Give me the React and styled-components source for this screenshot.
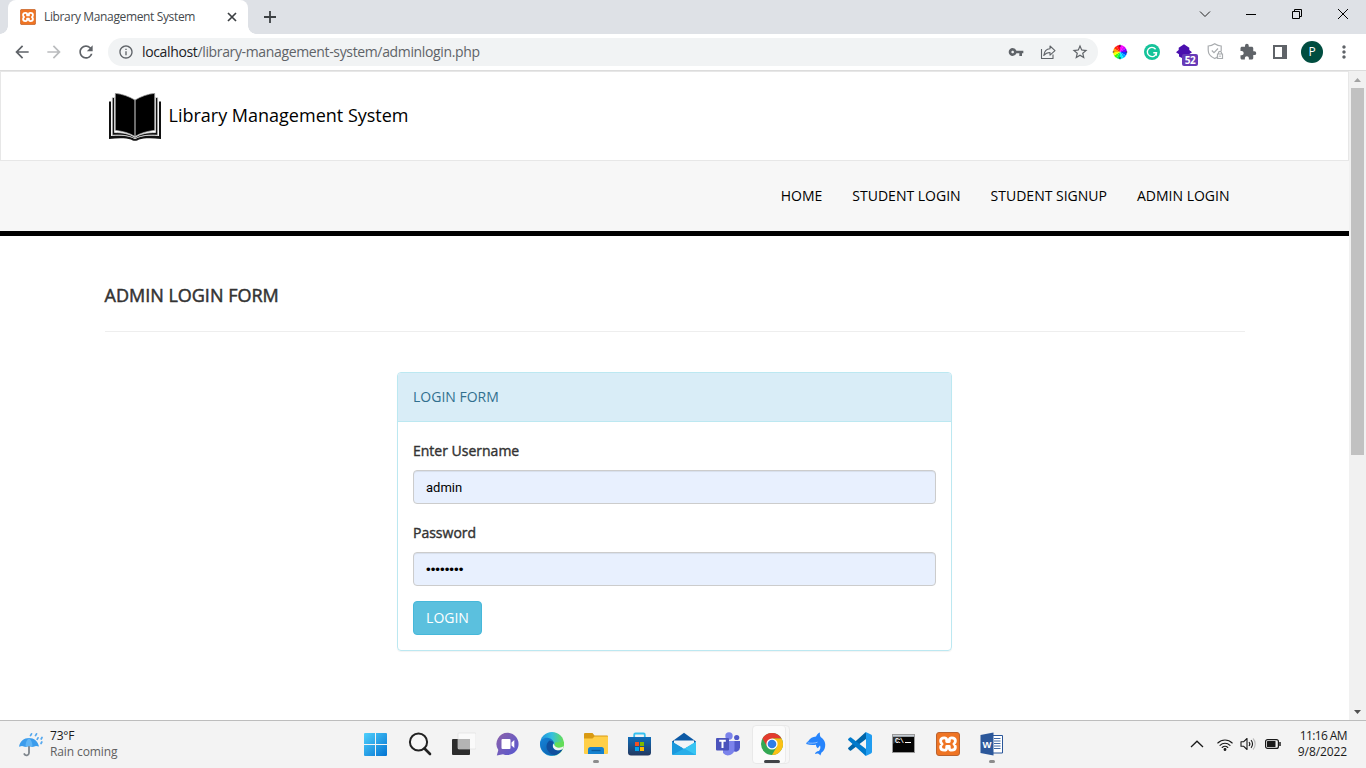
import React from "react";
import styled, { createGlobalStyle } from "styled-components";
import {
  MdArrowBack, MdArrowForward, MdRefresh, MdInfoOutline,
  MdVpnKey, MdStarBorder, MdExtension, MdMoreVert,
} from "react-icons/md";

const uiFont = `"Open Sans", "Noto Sans", sans-serif`;

const Global = createGlobalStyle`
  *, *::before, *::after { box-sizing: border-box; }
  html, body { margin: 0; overflow: hidden; }
  body { font-family: ${uiFont}; background: #fff; color: #000; }
  svg { display: block; flex: none; }
`;

const Screen = styled.div`
  width: 1366px;
  height: 768px;
  display: grid;
  grid-template-rows: 34px 37px 649px 48px;
  overflow: hidden;
`;

/* ---------- Browser ---------- */
const TabStrip = styled.header`
  display: flex;
  background: #dee1e6;
  padding-left: 8px;
`;
const Tab = styled.div`
  position: relative;
  width: 240px;
  height: 34px;
  padding: 0 8px 0 12px;
  display: flex;
  align-items: center;
  background: #fff;
  border-radius: 8px 8px 0 0;
  &::before, &::after {
    content: "";
    position: absolute;
    bottom: 0;
    width: 8px;
    height: 8px;
  }
  &::before { left: -8px; background: radial-gradient(circle at 0 0, transparent 7.5px, #fff 8px); }
  &::after { right: -8px; background: radial-gradient(circle at 100% 0, transparent 7.5px, #fff 8px); }
`;
const TabTitle = styled.span`
  flex: 1;
  margin-left: 8px;
  padding-bottom: 1px;
  font-size: 12px;
  letter-spacing: -0.36px;
  color: #45494d;
  white-space: nowrap;
`;
const NewTab = styled.div`
  width: 44px;
  display: flex;
  align-items: center;
  justify-content: center;
`;
const WindowControls = styled.div`
  margin-left: auto;
  display: flex;
  height: 28px;
`;
const WindowButton = styled.div`
  width: 46px;
  display: flex;
  align-items: center;
  justify-content: center;
`;
const Toolbar = styled.div`
  display: flex;
  align-items: center;
  padding: 0 6px;
  background: #fff;
  border-bottom: 1px solid #dcdcdc;
`;
const ToolSlot = styled.div`
  position: relative;
  width: 32px;
  height: 28px;
  display: flex;
  align-items: center;
  justify-content: center;
  color: ${(p) => p.$color || "#5f6368"};
`;
const Omnibox = styled.div`
  flex: none;
  width: 990px;
  height: 28px;
  margin: 0 6px;
  padding: 0 2px 0 10px;
  display: flex;
  align-items: center;
  border-radius: 14px;
  background: #f1f3f4;
  color: #5f6368;
`;
const Address = styled.span`
  flex: 1;
  margin-left: 8px;
  padding-bottom: 1px;
  font-size: 14px;
  letter-spacing: -0.355px;
  white-space: nowrap;
  b { font-weight: 400; color: #202124; }
`;
const Badge = styled.span`
  position: absolute;
  left: 14px;
  top: 16px;
  width: 16px;
  height: 12px;
  border-radius: 2px;
  background: #673ab7;
  color: #fff;
  font-size: 10px;
  font-weight: 700;
  letter-spacing: -0.4px;
  line-height: 12px;
  text-align: center;
`;
const Avatar = styled.div`
  width: 22px;
  height: 22px;
  border-radius: 50%;
  background: #004d40;
  color: #fff;
  font-size: 12px;
  line-height: 22px;
  text-align: center;
`;

/* ---------- Page ---------- */
const Viewport = styled.div`
  display: flex;
  overflow: hidden;
`;
const Page = styled.div`
  width: 1349px;
  background: #fff;
`;
const Container = styled.div`
  width: 1170px;
  height: 100%;
  margin: 0 auto;
  padding: 0 15px;
  display: ${(p) => (p.$row ? "flex" : "block")};
  justify-content: ${(p) => p.$justify || "flex-start"};
  align-items: center;
`;
const Masthead = styled.div`
  height: 90px;
  border: 1px solid #e7e7e7;
`;
const BookMark = styled.svg`
  margin: 2px 0 0 4.5px;
`;
const Brand = styled.a`
  margin-left: 7.5px;
  padding-bottom: 2px;
  font-size: 18px;
  color: #000;
`;
const Menu = styled.nav`
  height: 75px;
  background: #f7f7f7;
  border-bottom: 5px solid #000;
`;
const MenuLink = styled.a`
  padding: 0 15px 2px;
  font-size: 14px;
  color: #000;
  white-space: nowrap;
`;
const PageTitle = styled.h4`
  margin: 0 0 40px;
  padding: 49px 0 26px;
  border-bottom: 1px solid #eee;
  font-size: 18px;
  line-height: 20px;
  font-weight: 400;
  -webkit-text-stroke: 0.5px #333;
  color: #333;
`;
const Panel = styled.section`
  width: 555px;
  margin: 0 auto;
  border: 1px solid #bce8f1;
  border-radius: 4px;
  box-shadow: 0 1px 1px rgba(0, 0, 0, 0.05);
`;
const PanelHeading = styled.div`
  padding: 10px 15px;
  line-height: 28px;
  font-size: 14px;
  color: #31708f;
  background: #d9edf7;
  border-bottom: 1px solid #bce8f1;
  border-radius: 3px 3px 0 0;
`;
const PanelBody = styled.form`
  padding: 15px;
`;
const Field = styled.div`
  margin-bottom: 15px;
`;
const Label = styled.label`
  display: block;
  margin-bottom: 5px;
  font-size: 14px;
  line-height: 28px;
  color: #333;
  -webkit-text-stroke: 0.4px #333;
`;
const Input = styled.input`
  display: block;
  width: 100%;
  height: 34px;
  padding: 6px 12px;
  border: 1px solid #ccc;
  border-radius: 4px;
  outline: none;
  background: #e8f0fe;
  box-shadow: inset 0 1px 1px rgba(0, 0, 0, 0.075);
  color: #000;
  font: ${(p) => (p.type === "password" ? '13.33px "Liberation Sans"' : "13px Roboto")}, sans-serif;
`;
const LoginButton = styled.button`
  display: block;
  width: 69px;
  height: 34px;
  padding: 0;
  border: 1px solid #46b8da;
  border-radius: 4px;
  background: #5bc0de;
  color: #fff;
  font: 14px/20px ${uiFont};
`;
const Scrollbar = styled.div`
  width: 17px;
  display: flex;
  flex-direction: column;
  align-items: center;
  background: #f1f1f1;
`;
const ScrollArrow = styled.div`
  height: 17px;
  display: flex;
  align-items: center;
`;
const ScrollTrack = styled.div`
  flex: 1;
`;
const ScrollThumb = styled.div`
  width: 13px;
  height: 367px;
  background: #c1c1c1;
`;

/* ---------- Taskbar ---------- */
const Taskbar = styled.footer`
  display: grid;
  grid-template-columns: 354px 660px 1fr;
  border-top: 1px solid #bdbdbd;
  background: #f3f3f3;
`;
const Weather = styled.div`
  display: flex;
  align-items: center;
  padding: 0 0 1px 18px;
  gap: 7px;
`;
const WeatherText = styled.div`
  font-size: 12px;
  line-height: 16px;
  letter-spacing: -0.2px;
  color: #1a1a1a;
  small { display: block; font-size: 12px; color: #606060; letter-spacing: -0.1px; }
`;
const Apps = styled.div`
  display: flex;
`;
const AppSlot = styled.div`
  position: relative;
  width: 44px;
  height: 47px;
  padding: 0 1px 1px 0;
  display: flex;
  align-items: center;
  justify-content: center;
  &::before {
    content: "";
    position: absolute;
    inset: 4px 4px 4px 2px;
    border-radius: 4px;
    background: ${(p) => (p.$active ? "#fbfbfb" : "none")};
    border: ${(p) => (p.$active ? "1px solid #e9e9e9" : "0")};
    box-shadow: ${(p) => (p.$active ? "inset -3px 0 #f7f7f7, inset -4px 0 #ebebeb" : "none")};
  }
  &::after {
    content: "";
    position: absolute;
    bottom: 5px;
    width: ${(p) => (p.$active ? 16 : 6)}px;
    height: 3px;
    border-radius: 2px;
    background: ${(p) => (p.$active ? "#404347" : p.$open ? "#8c8c8c" : "none")};
  }
  svg { position: relative; }
`;
const Tray = styled.div`
  display: flex;
  align-items: center;
  justify-content: flex-end;
  padding: 0 19px 1px 0;
`;
const TraySlot = styled.div`
  width: ${(p) => p.$w}px;
  display: flex;
  justify-content: center;
`;
const Clock = styled.div`
  width: 59px;
  display: flex;
  flex-direction: column;
  align-items: flex-end;
  font-size: 12px;
  line-height: 16px;
  color: #1a1a1a;
  white-space: nowrap;
`;
const Time = styled.span`
  letter-spacing: -0.6px;
`;
const Day = styled.span`
  letter-spacing: -0.1px;
`;

/* ---------- Icons ---------- */
const Xampp = ({ size }) => (
  <svg width={size} height={size} viewBox="0 0 24 24">
    <rect x=".5" y=".5" width="23" height="23" rx="2.500" fill="#ef7423" stroke="#b9622f" />
    <path d="M8.200 5.800c-2.400 0-3.600 1.400-3.600 3.100 0 1.400.6 2.300 1.500 3.100-.9.8-1.500 1.700-1.500 3.100 0 1.700 1.200 3.100 3.600 3.100 1.700 0 2.500-.9 2.500-2.300v-1.500h2.600v1.500c0 1.400.8 2.300 2.500 2.300 2.400 0 3.600-1.400 3.600-3.100 0-1.400-.6-2.300-1.500-3.100.9-.8 1.500-1.700 1.500-3.100 0-1.700-1.200-3.100-3.600-3.100-1.700 0-2.500.9-2.500 2.300v1.500h-2.600V8.100c0-1.400-.8-2.300-2.500-2.300z" fill="none" stroke="#fff" strokeWidth="2.800" strokeLinejoin="round" />
  </svg>
);
const Book = () => (
  <BookMark width="52" height="48" viewBox="0 0 52 48">
    <path d="M0 8.500h2V43c9-.8 18-.8 24 3 6-3.800 15-3.800 24-3V8.500h2V46c-9-1-17-1-22 .5-2 1.700-6 1.700-8 0-5-1.500-13-1.500-22-.5z" fill="#111" />
    <path d="M3.200 4.500h2.300v35c8 0 15 1.200 20.500 5 5.500-3.800 12.500-5 20.500-5v-35h2.300v37.800c-8-.5-16-.2-22.800 3.400-6.800-3.600-14.800-3.900-22.800-3.400z" fill="#111" stroke="#e4e4e4" strokeWidth=".8" />
    <path d="M6.300.3C13 1 20 3.400 26 7c6-3.600 13-6 19.700-6.700v37C38 38.300 31.500 40 26 43.500c-5.500-3.500-12-5.200-19.700-6.200z" fill="#000" stroke="#aaa" strokeWidth=".7" />
    <path d="M26 7v36" stroke="#b5b5b5" strokeWidth="1.200" />
  </BookMark>
);
const ShareIcon = () => (
  <svg width="16" height="16" viewBox="0 0 16 16" fill="none" stroke="#5f6368" strokeWidth="1.100" strokeLinejoin="round">
    <path d="M1.500 5v9.500h11.500v-4" />
    <path d="M3.800 11.500c.4-4.200 2.500-6.600 6.200-6.800V2l5 4.600-5 4.500V8.500c-2.900 0-4.600 1-6.200 3z" />
  </svg>
);
const ColorWheel = () => {
  const colors = ["#f0f", "#d0f", "#70f", "#04f", "#0af", "#0ef", "#0e6", "#4f0", "#ff0", "#fa0", "#f30", "#f02"];
  return (
    <svg width="16" height="16" viewBox="-8 -8 16 16">
      {colors.map((c, i) => (
        <path key={c} d="M0 0L0-6.900A6.900 6.900 0 0 1 3.450-5.980Z" fill={c} transform={`rotate(${i * 30})`} />
      ))}
      <path d="M0-7.300v2.300M0 5v2.300M-7.300 0h1.600M5.700 0h1.600" stroke="#222" strokeWidth=".9" />
    </svg>
  );
};
const Grammarly = () => (
  <svg width="16" height="16" viewBox="0 0 16 16">
    <circle cx="8" cy="8" r="8" fill="#15c39a" />
    <path d="M11.600 5.200A4.600 4.600 0 1 0 12.500 8.700H9.300M12.500 8.700l-.3 3" fill="none" stroke="#fff" strokeWidth="1.400" />
  </svg>
);
const Cap = () => (
  <svg width="16" height="16" viewBox="0 0 16 16">
    <path d="M8 .3l5.300 3.500V6L16 8.300l-3 2v2.200L8 15l-5-2.500v-2.200l-3-2L2.700 6V3.800z" fill="#4a0fae" />
  </svg>
);
const ShieldIcon = () => (
  <svg width="18" height="18" viewBox="0 0 18 18" fill="none" stroke="#a9acaf" strokeWidth="1.200">
    <path d="M11 13.500c-1 .9-2 1.500-3.300 2C3.500 13.800 1.200 11 1.200 7V3c2.500 0 4.500-.8 6.500-2.200C9.700 2.200 11.700 3 14.200 3v5" />
    <path d="M4.800 7.500l2.200 2.200 4-4.200" />
    <path d="M10.500 11h5v4.500h-5zM11.500 11V9.800a1.500 1.500 0 0 1 3 0V11M13 12.500v1.500" />
  </svg>
);
const SidePanel = () => (
  <svg width="14" height="14" viewBox="0 0 14 14">
    <path d="M0 0h14v14H0zM2 2v10h7V2z" fill="#5f6368" fillRule="evenodd" />
  </svg>
);
const Umbrella = () => (
  <svg width="25" height="25" viewBox="0 0 25 25">
    <path d="M11 10v11a2.500 2.500 0 0 1-4.700 1" fill="none" stroke="#7e858c" strokeWidth="1.800" strokeLinecap="round" />
    <path d="M1 14.800C2 9.300 6 6 11 6s9 3.300 10 8.500l-3-.6-3.500 1-3.500-.8-3.500.8L4 13.900z" fill="#3b9cec" />
    <path d="M11 6c-2.500 2-3.500 5-3.500 8.900l3.500-.8 3.500.8c0-3.900-1-6.900-3.500-8.900z" fill="#61b5f5" />
    <path d="M13.500 1.800l-1 1.800M18.500 1.800l-1 1.800M20 5.800l-.8 1.500M24 5.500l-.8 1.500M23.800 10l-.8 1.500" stroke="#55a8ee" strokeWidth="1.700" strokeLinecap="round" />
  </svg>
);
const Windows = () => (
  <svg width="24" height="24" viewBox="0 0 24 24">
    <defs><linearGradient id="win" gradientUnits="userSpaceOnUse" x1="0" y1="0" x2="24" y2="24"><stop stopColor="#4fd0fc" /><stop offset="1" stopColor="#006fd0" /></linearGradient></defs>
    <path d="M0 1a1 1 0 0 1 1-1h10v11H0zM12 0h10a1 1 0 0 1 1 1v10H12zM0 12h11v11H1a1 1 0 0 1-1-1zM12 12h11v10a1 1 0 0 1-1 1H12z" transform="translate(0 1)" fill="url(#win)" />
  </svg>
);
const SearchIcon = () => (
  <svg width="24" height="24" viewBox="0 0 24 24" fill="none" stroke="#222">
    <circle cx="10.500" cy="10" r="8.600" strokeWidth="2" fill="#f7f7f7" />
    <path d="M16.500 16.500l5.500 5.500" strokeWidth="2.600" strokeLinecap="round" />
  </svg>
);
const TaskView = () => (
  <svg width="24" height="24" viewBox="0 0 24 24">
    <rect x="0" y="7" width="18" height="16" rx="1" fill="#2d2d2d" />
    <rect x="6" y="1" width="18" height="16" rx="1" fill="#fafafa" stroke="#ddd" strokeWidth=".6" />
    <path d="M6 7h12v10H7a1 1 0 0 1-1-1z" fill="#b4b4b4" />
  </svg>
);
const Chat = () => (
  <svg width="24" height="24" viewBox="0 0 24 24">
    <defs><linearGradient id="chat" x1="0" y1="0" x2="1" y2="1"><stop stopColor="#8d62aa" /><stop offset="1" stopColor="#5557d0" /></linearGradient></defs>
    <path d="M12 .7a11.200 11.200 0 1 1-5 21.500L.8 23.500 2.300 18A11.200 11.200 0 0 1 12 .7z" fill="url(#chat)" />
    <rect x="5.500" y="7" width="9" height="10" rx="1" fill="#fff" />
    <path d="M15.500 10.500L18.300 8v8l-2.800-2.500z" fill="#fff" />
  </svg>
);
const Edge = () => (
  <svg width="24" height="24" viewBox="0 0 24 24">
    <defs>
      <linearGradient id="e1" x1="0" y1=".3" x2="1" y2=".3"><stop stopColor="#1b8fdb" /><stop offset=".5" stopColor="#35bfe0" /><stop offset="1" stopColor="#66e04b" /></linearGradient>
      <linearGradient id="e2" x1="0" y1="0" x2="1" y2="1"><stop stopColor="#1583d8" /><stop offset="1" stopColor="#0c59a4" /></linearGradient>
    </defs>
    <circle cx="12" cy="12" r="12" fill="url(#e1)" />
    <path d="M0 12C.5 7 5 5 8.500 6c3.500.8 5.500 3 5.500 6-1.500 2.500-.5 5.300 3 6.200 2.200.5 4-.1 5.500-.9A12 12 0 0 1 0 12z" fill="url(#e2)" />
    <path d="M9.500 8.500c-3 2.300-4 6.500-1.800 10 1.700 2.800 4.300 4.300 7.300 4.700 3.500-.8 6-3 7.500-5.900-4.500 2.500-9.500 1.300-10-3.300-.2-1.700.4-3 1.300-4z" fill="#104f9e" />
    <path d="M24 11.500c0 3.200-2.500 5-5.500 5-3.500 0-4.800-1.500-4.300-2.700.7-1 1-1.800.6-3.300l9-.5z" fill="#62dd58" />
    <path d="M22.800 16.800c-2 1.500-4.800 1.900-6.800 1.100-3-1.100-4-4-2.300-6.400.6 3 2.800 4.200 5.300 4.200 1.700 0 3.500-.5 4.500-1.700z" fill="#f3f3f3" />
  </svg>
);
const Folder = () => (
  <svg width="24" height="24" viewBox="0 0 24 24">
    <path d="M0 2a1 1 0 0 1 1-1h7.500l2 2.500H23a1 1 0 0 1 1 1V9H0z" fill="#d99a13" />
    <path d="M0 6.500h8.500l2-2H24V21a1 1 0 0 1-1 1H1a1 1 0 0 1-1-1z" fill="#ffcf48" />
    <path d="M4 22v-4.500A2.500 2.500 0 0 1 6.500 15h11a2.500 2.500 0 0 1 2.500 2.500V22z" fill="#1481cf" />
    <path d="M7.500 18.500h9" stroke="#0a5a9c" strokeWidth="1.300" />
  </svg>
);
const Store = () => (
  <svg width="24" height="24" viewBox="0 0 24 24">
    <defs><linearGradient id="store" x1="0" y1="0" x2="0" y2="1"><stop stopColor="#0e6dba" /><stop offset="1" stopColor="#24385f" /></linearGradient></defs>
    <path d="M6.200 6V2.800A1.300 1.300 0 0 1 7.500 1.500h8a1.300 1.300 0 0 1 1.300 1.300V6" fill="none" stroke="#35c1f1" strokeWidth="1.800" />
    <path d="M0 5h23v15.500a3 3 0 0 1-3 3H3a3 3 0 0 1-3-3z" fill="url(#store)" />
    <path d="M7 10h4v4H7z" fill="#f25022" /><path d="M12 10h4v4h-4z" fill="#7fba00" />
    <path d="M7 15h4v4H7z" fill="#00a4ef" /><path d="M12 15h4v4h-4z" fill="#ffb900" />
  </svg>
);
const Mail = () => (
  <svg width="24" height="24" viewBox="0 0 24 24">
    <path d="M0 9.500L12 .7l12 8.800V16H0z" fill="#0c59a5" />
    <path d="M2 8.500h20v3L12 17 2 11.500z" fill="#f2f5f8" />
    <path d="M24 9.500V23H2z" fill="#38c5f3" /><path d="M0 9.500L22 23H1a1 1 0 0 1-1-1z" fill="#1a98dc" />
    <path d="M0 23L12.300 16.600 24 23z" fill="#28aee9" />
  </svg>
);
const Teams = () => (
  <svg width="24" height="24" viewBox="0 0 24 24">
    <circle cx="13" cy="4" r="3.700" fill="#7b83eb" /><circle cx="20.700" cy="5.500" r="2.600" fill="#5059c9" />
    <path d="M15 9h9v6.500a4.500 4.500 0 0 1-7 3.500z" fill="#5059c9" />
    <path d="M7 9h11.500v8a6.500 6.500 0 0 1-11.500 4z" fill="#7b83eb" />
    <rect x="0" y="6" width="13" height="12.500" rx="1" fill="#4b53bc" />
    <path d="M3.200 8.800h6.600M6.500 8.800v7.200" stroke="#fff" strokeWidth="2" />
  </svg>
);
const Chrome = () => (
  <svg width="24" height="24" viewBox="0 0 24 24">
    <circle cx="12" cy="12" r="11" fill="#34a853" />
    <path d="M2.470 6.500A11 11 0 0 1 21.530 6.500H12L7.200 14.700z" fill="#e33b2e" />
    <path d="M21.530 6.500A11 11 0 0 1 12 23l4.800-8.200L12 6.500z" fill="#fbc116" />
    <circle cx="12" cy="12" r="5.600" fill="#fff" /><circle cx="12" cy="12" r="4.300" fill="#2f7de9" />
  </svg>
);
const Dolphin = () => (
  <svg width="24" height="24" viewBox="0 0 24 24">
    <path d="M2.200 12c.2-1.500 1-2.300 2-2.800C6 6.300 8.800 4.700 12 4.500 12.800 2.500 14.200 1 16 .4c-.4 1.800-.2 3.500.9 4.800 3.900 2.600 5.200 6.500 3.900 10.700-.6 2-1.800 3.600-3.300 4.700l-1.200 3c-.7-1-1.300-1.700-2.300-2.100-1.200-.3-2 .1-3 .5.3-1.700 1.700-2.900 4-3 1.500-2 1.700-3.800 1-5.500l-2.200 2.700c-1.300-.9-1.800-1.900-1.800-3.500-3.500.8-6.800.2-9.800-.7z" fill="#2684fc" />
    <path d="M3.500 10.800c3.500.6 7 .6 10-.6" fill="none" stroke="#d6e6fb" strokeWidth=".6" />
  </svg>
);
const VSCode = () => (
  <svg width="24" height="24" viewBox="0 0 24 24">
    <path d="M.4 15.800a1 1 0 0 0 0 1.400l1.400 1.200a1 1 0 0 0 1.300 0L18 7V.3a1.800 1.800 0 0 0-1 .5z" fill="#0065a9" />
    <path d="M.4 8.200a1 1 0 0 1 0-1.400l1.400-1.200a1 1 0 0 1 1.300 0L18 17v6.700a1.800 1.800 0 0 1-1-.5z" fill="#007acc" />
    <path d="M17.500 23.800a1.500 1.500 0 0 1-1-.7c.5.4 1.500.1 1.500-.8V1.700c0-.9-1-1.200-1.500-.8a1.500 1.500 0 0 1 1.700-.6l4.800 2.300a1.500 1.500 0 0 1 1 1.400v16a1.500 1.500 0 0 1-1 1.400l-4.700 2.300z" fill="#1f9cf0" />
  </svg>
);
const TermText = styled.text`
  font: 700 6.5px "Liberation Mono", monospace;
  fill: #fff;
`;
const Terminal = () => (
  <svg width="24" height="24" viewBox="0 0 24 24">
    <rect x=".5" y="2.500" width="22" height="18" fill="#050505" stroke="#999" />
    <path d="M1 3h21v1.800H1z" fill="#c5ccd4" />
    <path d="M1 12l9-7H1z" fill="#333" />
    <TermText x="3" y="10.500" textLength="9">C:\</TermText>
    <path d="M13 10.500h6" stroke="#fff" />
  </svg>
);
const WordText = styled.text`
  font: 700 9.5px "Liberation Sans", sans-serif;
  fill: #fff;
`;
const Word = () => (
  <svg width="24" height="24" viewBox="0 0 24 24">
    <path d="M12 3.500h10.500V21H12z" fill="#fff" stroke="#2b579a" />
    <path d="M14 6.500h6.500M14 9h6.500M14 11.500h6.500M14 14h6.500M14 16.500h6.500" stroke="#2b579a" strokeWidth=".9" />
    <path d="M.5 3L13.500.5v23L.5 21z" fill="#2b579a" />
    <WordText x="2.500" y="15.600">W</WordText>
  </svg>
);

const apps = [
  { icon: Windows }, { icon: SearchIcon }, { icon: TaskView }, { icon: Chat }, { icon: Edge },
  { icon: Folder, open: true }, { icon: Store }, { icon: Mail }, { icon: Teams },
  { icon: Chrome, active: true }, { icon: Dolphin }, { icon: VSCode }, { icon: Terminal },
  { icon: () => <Xampp size={24} /> }, { icon: Word, open: true },
];

const links = ["HOME", "STUDENT LOGIN", "STUDENT SIGNUP", "ADMIN LOGIN"];

function Browser() {
  return (
    <>
      <TabStrip>
        <Tab>
          <Xampp size={16} />
          <TabTitle>Library Management System</TabTitle>
          <svg width="16" height="16" viewBox="0 0 16 16"><path d="M4 4l8 8M12 4l-8 8" stroke="#3c4043" strokeWidth="1.700" /></svg>
        </Tab>
        <NewTab><svg width="12" height="12" viewBox="0 0 12 12"><path d="M0 6h12M6 0v12" stroke="#3c4043" strokeWidth="1.800" /></svg></NewTab>
        <WindowControls>
          <WindowButton><svg width="12" height="12" viewBox="0 0 12 12"><path d="M1 3.500l5 5 5-5" fill="none" stroke="#222" /></svg></WindowButton>
          <WindowButton><svg width="10" height="10" viewBox="0 0 10 10"><path d="M0 5.500h10" stroke="#000" /></svg></WindowButton>
          <WindowButton><svg width="10" height="10" viewBox="0 0 10 10"><path d="M.5 2.500h7v7h-7zM2.500 2.500v-2h7v7h-2" fill="none" stroke="#000" /></svg></WindowButton>
          <WindowButton><svg width="12" height="12" viewBox="0 0 12 12"><path d="M1 1l10 10M11 1L1 11" fill="none" stroke="#000" /></svg></WindowButton>
        </WindowControls>
      </TabStrip>
      <Toolbar>
        <ToolSlot><MdArrowBack size={20} /></ToolSlot>
        <ToolSlot $color="#babcbe"><MdArrowForward size={20} /></ToolSlot>
        <ToolSlot><MdRefresh size={20} /></ToolSlot>
        <Omnibox>
          <MdInfoOutline size={16} />
          <Address><b>localhost</b>/library-management-system/adminlogin.php</Address>
          <ToolSlot><MdVpnKey size={16} /></ToolSlot>
          <ToolSlot><ShareIcon /></ToolSlot>
          <ToolSlot><MdStarBorder size={18} /></ToolSlot>
        </Omnibox>
        <ToolSlot><ColorWheel /></ToolSlot>
        <ToolSlot><Grammarly /></ToolSlot>
        <ToolSlot><Cap /><Badge>52</Badge></ToolSlot>
        <ToolSlot><ShieldIcon /></ToolSlot>
        <ToolSlot><MdExtension size={18} /></ToolSlot>
        <ToolSlot><SidePanel /></ToolSlot>
        <ToolSlot><Avatar>P</Avatar></ToolSlot>
        <ToolSlot><MdMoreVert size={20} /></ToolSlot>
      </Toolbar>
    </>
  );
}

function LoginPage() {
  return (
    <Page>
      <Masthead>
        <Container $row>
          <Book />
          <Brand>Library Management System</Brand>
        </Container>
      </Masthead>
      <Menu>
        <Container $row $justify="flex-end">
          {links.map((t) => <MenuLink key={t}>{t}</MenuLink>)}
        </Container>
      </Menu>
      <Container>
        <PageTitle>ADMIN LOGIN FORM</PageTitle>
        <Panel>
          <PanelHeading>LOGIN FORM</PanelHeading>
          <PanelBody>
            <Field>
              <Label>Enter Username</Label>
              <Input type="text" defaultValue="admin" />
            </Field>
            <Field>
              <Label>Password</Label>
              <Input type="password" defaultValue="password" />
            </Field>
            <LoginButton type="button">LOGIN</LoginButton>
          </PanelBody>
        </Panel>
      </Container>
    </Page>
  );
}

export default function App() {
  return (
    <Screen>
      <Global />
      <Browser />
      <Viewport>
        <LoginPage />
        <Scrollbar>
          <ScrollArrow><svg width="7" height="4" viewBox="0 0 7 4"><path d="M0 4L3.500 0 7 4z" fill="#a3a3a3" /></svg></ScrollArrow>
          <ScrollTrack><ScrollThumb /></ScrollTrack>
          <ScrollArrow><svg width="7" height="4" viewBox="0 0 7 4"><path d="M0 0L3.500 4 7 0z" fill="#505050" /></svg></ScrollArrow>
        </Scrollbar>
      </Viewport>
      <Taskbar>
        <Weather>
          <Umbrella />
          <WeatherText>73°F<small>Rain coming</small></WeatherText>
        </Weather>
        <Apps>
          {apps.map(({ icon: Icon, open, active }, i) => (
            <AppSlot key={i} $open={open} $active={active}><Icon /></AppSlot>
          ))}
        </Apps>
        <Tray>
          <TraySlot $w={28}><svg width="14" height="8" viewBox="0 0 14 8"><path d="M1 7l6-5.800L13 7" fill="none" stroke="#1a1a1a" strokeWidth="1.300" /></svg></TraySlot>
          <TraySlot $w={28}>
            <svg width="16" height="13" viewBox="0 0 16 13" fill="none" stroke="#1a1a1a" strokeWidth="1.100" strokeLinecap="round">
              <path d="M.8 5a10.200 10.200 0 0 1 14.400 0M3 7.300a7.100 7.100 0 0 1 10 0M5.200 9.500a4 4 0 0 1 5.600 0" />
              <circle cx="8" cy="11.500" r=".9" fill="#1a1a1a" />
            </svg>
          </TraySlot>
          <TraySlot $w={18}>
            <svg width="16" height="14" viewBox="0 0 16 14" fill="none" stroke="#1a1a1a" strokeWidth="1.100" strokeLinejoin="round">
              <path d="M1 4.800h2.500L7 1.500v11L3.500 9.200H1z" /><path d="M9 5a3 3 0 0 1 0 4M11 3.200a5.500 5.500 0 0 1 0 7.600" />
              <path d="M13 1.500a8 8 0 0 1 0 11" stroke="#bbb" />
            </svg>
          </TraySlot>
          <TraySlot $w={31}>
            <svg width="16" height="10" viewBox="0 0 16 10">
              <rect x=".6" y=".6" width="12.800" height="8.800" rx="2" fill="none" stroke="#1a1a1a" strokeWidth="1.200" />
              <rect x="2" y="2" width="8.500" height="6" rx=".5" fill="#1a1a1a" /><path d="M15 3v4" stroke="#1a1a1a" strokeWidth="1.500" />
            </svg>
          </TraySlot>
          <Clock><Time>11:16 AM</Time><Day>9/8/2022</Day></Clock>
        </Tray>
      </Taskbar>
    </Screen>
  );
}
